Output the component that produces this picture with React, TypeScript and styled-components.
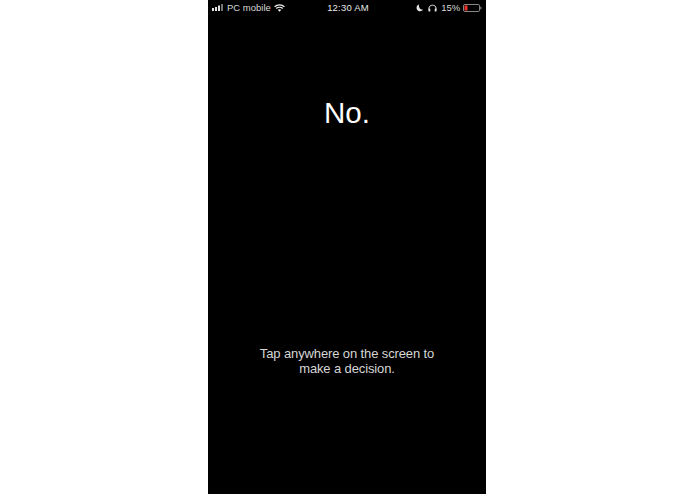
import React from 'react';
import styled, { createGlobalStyle } from 'styled-components';

const GlobalStyle = createGlobalStyle`
  html, body {
    margin: 0;
    height: 100%;
    background: #fff;
    overflow: hidden;
  }
`;

const Page = styled.div`
  display: flex;
  justify-content: center;
  height: 494px;
  padding-right: 1px;
`;

const Phone = styled.div`
  width: 278px;
  height: 494px;
  background: #000;
  color: #fff;
  display: flex;
  flex-direction: column;
  font-family: 'Liberation Sans', Arial, sans-serif;
`;

const StatusBar = styled.div`
  height: 15px;
  display: grid;
  grid-template-columns: 1fr auto 1fr;
  align-items: center;
  padding: 0 4px 0 4px;
  font-size: 9.5px;
  color: #d8d8d8;
`;

const StatusLeft = styled.div`
  display: flex;
  align-items: center;
  gap: 2px;
`;

const StatusRight = styled.div`
  display: flex;
  align-items: center;
  justify-content: flex-end;
  gap: 3px;
`;

const Clock = styled.span`
  font-weight: 400;
  letter-spacing: 0.2px;
  color: #e8e8e8;
  margin-left: 2px;
`;

const WifiIcon = styled.svg`
  margin-left: 1px;
`;

const MoonIcon = styled.svg`
  margin-right: 1px;
`;

const Percent = styled.span`
  margin-left: 1px;
  letter-spacing: -0.1px;
`;

const Headline = styled.h1`
  margin: 81px 0 0;
  font-size: 29.5px;
  line-height: 34px;
  font-weight: 400;
  text-align: center;
`;

const Hint = styled.p`
  margin: 216px 0 0;
  font-size: 13px;
  line-height: 15px;
  letter-spacing: -0.12px;
  text-align: center;
  color: #d6d6d6;
`;

const Signal = () => (
  <svg width="13" height="7" viewBox="0 0 13 7">
    <rect x="0" y="4" width="2" height="3" fill="#e4e4e4" />
    <rect x="3" y="3" width="2" height="4" fill="#e4e4e4" />
    <rect x="6" y="1.5" width="2" height="5.5" fill="#e4e4e4" />
    <rect x="9" y="0" width="2" height="7" fill="#777" />
  </svg>
);

const Wifi = () => (
  <WifiIcon width="11" height="8" viewBox="0 0 11 8" fill="none" stroke="#f0f0f0">
    <path d="M0.6 2.8C3.4 0.3 7.6 0.3 10.4 2.8" strokeWidth="1.3" />
    <path d="M2.2 4.4C4 2.9 7 2.9 8.8 4.4" strokeWidth="1.3" />
    <path d="M5.5 7.8L3.7 5.8C4.8 5 6.2 5 7.3 5.8Z" fill="#f0f0f0" stroke="none" />
  </WifiIcon>
);

const Moon = () => (
  <MoonIcon width="8" height="8" viewBox="0 0 8 8">
    <path d="M3 0.5C1.2 1 0.3 2.6 0.6 4.4C1 6.4 3.2 7.7 5.2 7.1C6 6.9 6.8 6.3 7.2 5.6C4.7 6.2 2.3 3.6 3 0.5Z" fill="#e4e4e4" />
  </MoonIcon>
);

const Headphones = () => (
  <svg width="9" height="8" viewBox="0 0 9 8" fill="none">
    <path d="M1 6V4.2C1 0.2 8 0.2 8 4.2V6" stroke="#e4e4e4" strokeWidth="1" />
    <rect x="0.5" y="4.5" width="1.8" height="3" rx="0.6" fill="#e4e4e4" />
    <rect x="6.7" y="4.5" width="1.8" height="3" rx="0.6" fill="#e4e4e4" />
  </svg>
);

const Battery = () => (
  <svg width="19" height="8" viewBox="0 0 19 8">
    <rect x="0.5" y="0.5" width="16" height="7" rx="1.3" fill="none" stroke="#aaa" strokeWidth="0.8" />
    <rect x="1.5" y="1.5" width="3" height="5" fill="#f0302a" />
    <rect x="17.3" y="2.7" width="1" height="2.6" fill="#999" />
  </svg>
);

const App = () => {
  return (
    <Page>
      <GlobalStyle />
      <Phone>
        <StatusBar>
          <StatusLeft>
            <Signal />
            <span>PC mobile</span>
            <Wifi />
          </StatusLeft>
          <Clock>12:30 AM</Clock>
          <StatusRight>
            <Moon />
            <Headphones />
            <Percent>15%</Percent>
            <Battery />
          </StatusRight>
        </StatusBar>
        <Headline>No.</Headline>
        <Hint>
          Tap anywhere on the screen to
          <br />
          make a decision.
        </Hint>
      </Phone>
    </Page>
  );
};

export default App;
